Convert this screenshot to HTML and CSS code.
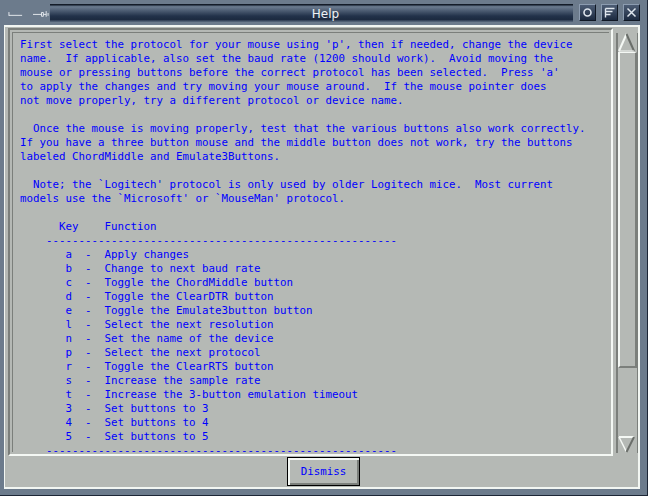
FILE: index.html
```html
<!DOCTYPE html>
<html>
  <head>
    <title>Help</title>
    <meta charset="UTF-8" />
    <link rel="stylesheet" href="styles.css">
  </head>

  <body>
    <div class="window">
      <!-- title bar -->
      <div class="titlebar">
        <div class="tb-left">
          <svg width="16" height="8" viewBox="0 0 16 8"><path d="M1 3v4M1 6.5h14" stroke="#e8ecf0" stroke-width="1" fill="none"/></svg>
          <svg width="18" height="8" viewBox="0 0 18 8"><path d="M0 5.5h9M9 3.5h2v4h-2zM11 5.5h3M14 2v6M16 4v3" stroke="#e8ecf0" stroke-width="1" fill="none"/></svg>
        </div>
        <div class="tb-title">Help</div>
        <div class="tb-btns">
          <div class="tb-btn">
            <svg width="11" height="11" viewBox="0 0 11 11"><circle cx="5.5" cy="5.5" r="3.5" stroke="#dfe6ee" stroke-width="1.6" fill="none"/></svg>
          </div>
          <div class="tb-btn">
            <svg width="11" height="11" viewBox="0 0 11 11"><path d="M1.5 1.5v9M1.5 1.5h9M1.5 4.5h7M1.5 7.5h5" stroke="#dfe6ee" stroke-width="1.4" fill="none"/></svg>
          </div>
          <div class="tb-btn">
            <svg width="11" height="11" viewBox="0 0 11 11"><path d="M1.5 1.5l8 8M9.5 1.5l-8 8" stroke="#dfe6ee" stroke-width="1.5" fill="none"/></svg>
          </div>
        </div>
      </div>

      <div class="dialog">
        <div class="main">
          <div class="pane">
            <div class="text">First select the protocol for your mouse using 'p', then if needed, change the device
name.  If applicable, also set the baud rate (1200 should work).  Avoid moving the
mouse or pressing buttons before the correct protocol has been selected.  Press 'a'
to apply the changes and try moving your mouse around.  If the mouse pointer does
not move properly, try a different protocol or device name.

  Once the mouse is moving properly, test that the various buttons also work correctly.
If you have a three button mouse and the middle button does not work, try the buttons
labeled ChordMiddle and Emulate3Buttons.

  Note; the `Logitech' protocol is only used by older Logitech mice.  Most current
models use the `Microsoft' or `MouseMan' protocol.

      Key    Function
    ------------------------------------------------------
       a  -  Apply changes
       b  -  Change to next baud rate
       c  -  Toggle the ChordMiddle button
       d  -  Toggle the ClearDTR button
       e  -  Toggle the Emulate3button button
       l  -  Select the next resolution
       n  -  Set the name of the device
       p  -  Select the next protocol
       r  -  Toggle the ClearRTS button
       s  -  Increase the sample rate
       t  -  Increase the 3-button emulation timeout
       3  -  Set buttons to 3
       4  -  Set buttons to 4
       5  -  Set buttons to 5
    ------------------------------------------------------</div>
          </div>
          <div class="scrollbar">
            <svg class="arrow" width="17" height="19" viewBox="0 0 17 19">
              <path d="M1 18L8.5 1" stroke="#f4f8f4" stroke-width="2" fill="none"/>
              <path d="M8.5 1L16 18" stroke="#6a6e6a" stroke-width="2" fill="none"/>
              <path d="M1 18h15" stroke="#f4f8f4" stroke-width="1" fill="none"/>
            </svg>
            <div class="thumb"></div>
            <div class="trough"></div>
            <svg class="arrow" width="17" height="17" viewBox="0 0 17 17">
              <path d="M1 1h15" stroke="#f4f8f4" stroke-width="2" fill="none"/>
              <path d="M1 1L8.5 16" stroke="#f4f8f4" stroke-width="1.5" fill="none"/>
              <path d="M16 1L8.5 16" stroke="#6a6e6a" stroke-width="2" fill="none"/>
            </svg>
          </div>
        </div>
        <div class="footer">
          <button class="dismiss">Dismiss</button>
        </div>
      </div>
    </div>
  </body>
</html>
```

FILE: styles.css
```css
html {
  height: 100%;
  overflow: hidden;
}
body {
  margin: 0;
  background: #6c7b8c;
  font-family: "DejaVu Sans Mono", "Liberation Mono", monospace;
}
.window {
  width: 648px;
  height: 496px;
  display: flex;
  flex-direction: column;
  background: #6c7b8c;
  border-right: 1px solid #1c2636;
  border-bottom: 1px solid #1c2636;
  box-sizing: border-box;
}
.titlebar {
  height: 25px;
  display: flex;
  align-items: stretch;
}
.tb-left {
  width: 50px;
  display: flex;
  align-items: center;
  gap: 10px;
  padding-left: 8px;
  box-sizing: border-box;
}
.tb-title {
  flex: 1;
  margin: 4px 0 3px;
  padding-left: 28px;
  background: linear-gradient(#1e2a3a 0, #6c7c90 10%, #4a5a70 35%, #22324a 65%, #1c2a40 85%, #5c6c80 100%);
  border-top: 1px solid #141c28;
  color: #eef2f6;
  font-family: "DejaVu Sans", "Liberation Sans", sans-serif;
  font-size: 12px;
  display: flex;
  align-items: center;
  justify-content: center;
}
.tb-btns {
  display: flex;
  align-items: center;
  gap: 5px;
  padding: 0 7px 0 6px;
}
.tb-btn {
  width: 17px;
  height: 17px;
  box-sizing: border-box;
  border: 1px solid #8c9cb0;
  border-right-color: #101824;
  border-bottom-color: #101824;
  background: linear-gradient(#4c5c74, #1c2a40);
  display: flex;
  align-items: center;
  justify-content: center;
}
.dialog {
  flex: 1;
  margin: 0 7px 6px 4px;
  background: #b5b9b5;
  border: 2px solid #f2f6f2;
  border-left-width: 1px;
  display: flex;
  flex-direction: column;
}
.main {
  height: 428px;
  display: flex;
  margin: 1px 0 0 3px;
}
.pane {
  width: 606px;
  box-sizing: border-box;
  border: 2px solid #7b7f7b;
  border-right-color: #f4f8f4;
  border-bottom-color: #f4f8f4;
  padding: 2px;
  display: flex;
}
.text {
  flex: 1;
  border-top: 1px solid #7b7f7b;
  border-left: 1px solid #7b7f7b;
  padding: 5px 0 0 7px;
  white-space: pre;
  color: #0000ff;
  font-size: 10.8px;
  line-height: 14px;
}
.scrollbar {
  width: 19px;
  margin: 5px 0 3px 3px;
  border-left: 2px solid #7b7f7b;
  border-right: 1px solid #7b7f7b;
  display: flex;
  flex-direction: column;
}
.arrow {
  display: block;
  flex: none;
}
.thumb {
  height: 316px;
  flex: none;
  box-sizing: border-box;
  border-top: 1px solid #f4f8f4;
  border-left: 2px solid #f4f8f4;
  border-right: 2px solid #7b7f7b;
  border-bottom: 2px solid #7b7f7b;
}
.trough {
  flex: 1;
}
.footer {
  flex: 1;
  display: flex;
  justify-content: center;
  align-items: center;
  padding-left: 4px;
}
.dismiss {
  width: 73px;
  height: 29px;
  background: #b5b9b5;
  border: 1px solid #000;
  box-shadow: inset 2px 2px 0 #f4f8f4, inset -2px -2px 0 #7b7f7b;
  color: #0000ff;
  font-family: "DejaVu Sans Mono", "Liberation Mono", monospace;
  font-size: 10.8px;
  padding: 0;
}
```
